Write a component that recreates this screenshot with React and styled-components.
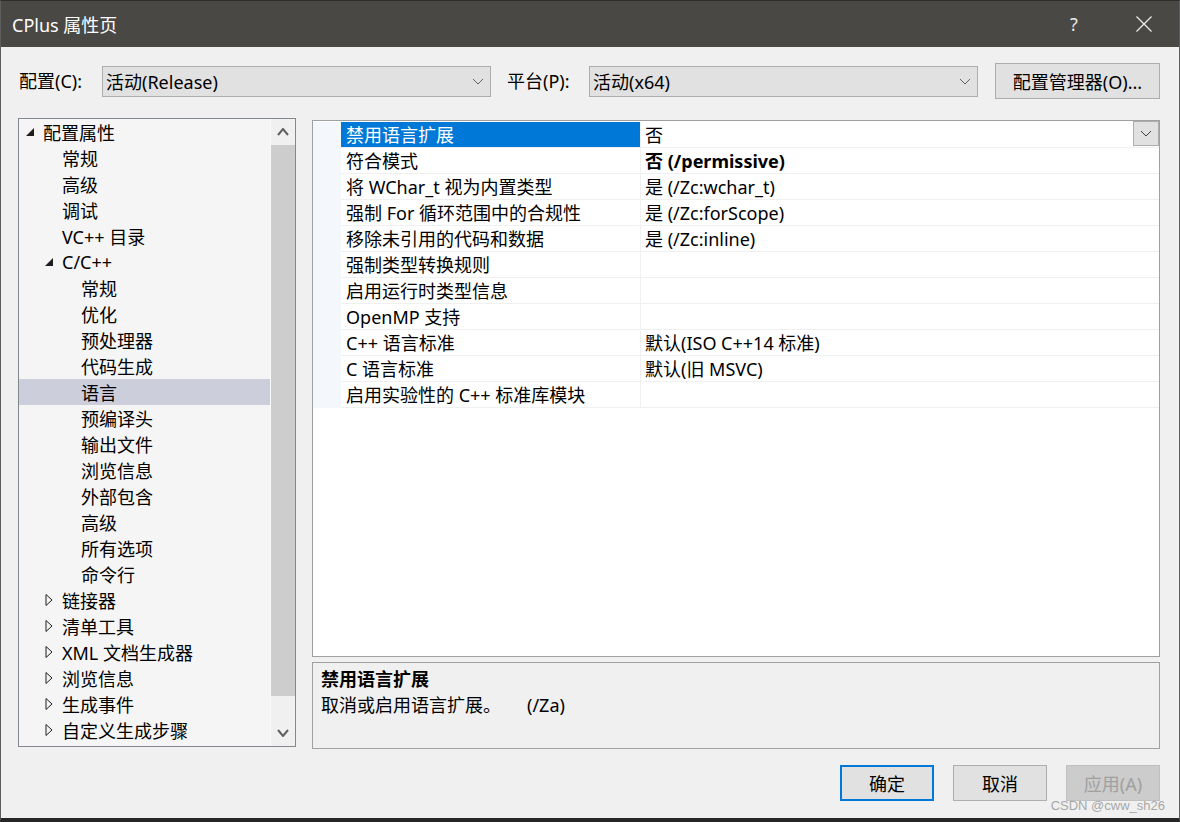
import React from "react";
import styled, { createGlobalStyle } from "styled-components";

const GlobalStyle = createGlobalStyle`
  html, body { margin: 0; padding: 0; background: #2b2b2b; }
  body { font-family: "Noto Sans", "Noto Sans CJK SC", sans-serif; }
  * { box-sizing: border-box; }
`;

const FONT = `"Noto Sans", "Noto Sans CJK SC", sans-serif`;

const Window = styled.div`
  position: relative;
  width: 1180px;
  height: 822px;
  display: flex;
  flex-direction: column;
  border-top: 1px solid #2d2d2d;
  border-left: 1px solid #5e5e5e;
  border-right: 1px solid #5e5e5e;
  border-bottom: 4px solid #262626;
  font-family: ${FONT};
  font-size: 18px;
  color: #000;
  overflow: hidden;
`;

const TitleBar = styled.div`
  height: 46px;
  background: #4a4845;
  color: #fff;
  display: flex;
  align-items: center;
  padding-left: 11px;
  font-size: 18px;
  flex-shrink: 0;
`;

const TitleText = styled.div`
  flex: 1;
`;

const TitleButton = styled.div`
  width: 70px;
  height: 46px;
  display: flex;
  align-items: center;
  justify-content: center;
  color: #e8e8e8;
  font-size: 18px;
`;

const Body = styled.div`
  flex: 1;
  background: #f0f0f0;
  display: flex;
  flex-direction: column;
  padding: 16px 19px 0 17px;
`;

const ConfigRow = styled.div`
  display: flex;
  align-items: center;
  height: 36px;
`;

const Label = styled.div`
  width: ${(p) => p.$w}px;
  flex-shrink: 0;
  padding-left: ${(p) => p.$pl || 0}px;
  line-height: 31px;
`;

const Combo = styled.div`
  width: 389px;
  height: 31px;
  border: 1px solid #adadad;
  background: #e1e1e1;
  display: flex;
  align-items: center;
  padding: 0 6px 0 3px;
  flex-shrink: 0;
`;

const ComboText = styled.div`
  flex: 1;
`;

const ManagerButton = styled.button`
  margin-left: 17px;
  width: 165px;
  height: 36px;
  border: 1px solid #adadad;
  background: #e1e1e1;
  font-family: ${FONT};
  font-size: 18px;
  color: #000;
  padding: 0;
`;

const Main = styled.div`
  margin-top: 19px;
  display: flex;
  gap: 16px;
`;

const TreePanel = styled.div`
  width: 278px;
  height: 629px;
  border: 1px solid #828790;
  background: #f5f5f5;
  display: flex;
`;

const TreeList = styled.div`
  flex: 1;
  display: flex;
  flex-direction: column;
`;

const TreeItem = styled.div`
  height: 26px;
  display: flex;
  align-items: center;
  padding-left: ${(p) => 7 + p.$level * 19}px;
  background: ${(p) => (p.$selected ? "#cccedb" : "transparent")};
  white-space: nowrap;
`;

const Expander = styled.span`
  width: 17px;
  flex-shrink: 0;
  display: flex;
  align-items: center;
`;

const ScrollBar = styled.div`
  width: 25px;
  background: #f0f0f0;
  border-left: 1px solid #fafafa;
  display: flex;
  flex-direction: column;
`;

const ScrollArrow = styled.div`
  height: 26px;
  display: flex;
  align-items: center;
  justify-content: center;
  flex-shrink: 0;
`;

const ScrollThumb = styled.div`
  height: 551px;
  background: #cdcdcd;
`;

const ScrollTrack = styled.div`
  flex: 1;
`;

const RightCol = styled.div`
  width: 848px;
  margin-top: 2px;
  display: flex;
  flex-direction: column;
  gap: 5px;
`;

const Grid = styled.div`
  height: 537px;
  border: 1px solid #a0a0a0;
  background: #fff;
  display: flex;
  flex-direction: column;
  padding-top: 1px;
`;

const GridRow = styled.div`
  height: 26px;
  display: grid;
  grid-template-columns: 28px 300px 1fr;
  line-height: 24px;
`;

const Gutter = styled.div`
  background: #f4f7fb;
`;

const NameCell = styled.div`
  padding-left: 5px;
  display: flex;
  align-items: center;
  white-space: nowrap;
  border-right: 1px solid #f0f0f0;
  border-bottom: 1px solid #f0f0f0;
  background: ${(p) => (p.$selected ? "#0078d7" : "transparent")};
  color: ${(p) => (p.$selected ? "#fff" : "#000")};
`;

const ValueCell = styled.div`
  padding-left: 4px;
  display: flex;
  align-items: center;
  white-space: nowrap;
  border-bottom: 1px solid #f0f0f0;
  font-weight: ${(p) => (p.$bold ? 700 : 400)};
`;

const ValueText = styled.div`
  flex: 1;
`;

const DropButton = styled.div`
  width: 26px;
  height: 25px;
  margin-top: -1px;
  background: #e1e1e1;
  border: 1px solid #adadad;
  display: flex;
  align-items: center;
  justify-content: center;
  align-self: flex-start;
`;

const DescPanel = styled.div`
  height: 87px;
  border: 1px solid #a0a0a0;
  background: #f0f0f0;
  padding: 3px 8px;
  line-height: 26px;
`;

const DescTitle = styled.div`
  font-weight: 700;
`;

const DescText = styled.div`
  white-space: nowrap;
`;

const DescSwitch = styled.span`
  margin-left: 26px;
`;

const ButtonRow = styled.div`
  margin-top: 16px;
  display: flex;
  justify-content: flex-end;
  gap: 19px;
`;

const DlgButton = styled.button`
  width: 94px;
  height: 36px;
  padding: 0;
  font-family: ${FONT};
  font-size: 18px;
  background: ${(p) => (p.$disabled ? "#cccccc" : "#e1e1e1")};
  color: ${(p) => (p.$disabled ? "#a0a0a0" : "#000")};
  border: ${(p) =>
    p.$primary ? "2px solid #0078d7" : p.$disabled ? "1px solid #bfbfbf" : "1px solid #adadad"};
`;

const Watermark = styled.div`
  position: absolute;
  right: 14px;
  bottom: 5px;
  font-family: "Liberation Sans", sans-serif;
  font-size: 13px;
  color: rgba(140, 140, 140, 0.75);
`;

const Chevron = ({ w = 10, h = 5, color = "#606060", sw = 1, up = false }) => (
  <svg width={w + 2} height={h + 2} viewBox={`0 0 ${w + 2} ${h + 2}`}>
    <polyline
      points={
        up
          ? `1,${h + 1} ${w / 2 + 1},1 ${w + 1},${h + 1}`
          : `1,1 ${w / 2 + 1},${h + 1} ${w + 1},1`
      }
      fill="none"
      stroke={color}
      strokeWidth={sw}
    />
  </svg>
);

const ExpandedTri = () => (
  <svg width="9" height="9" viewBox="0 0 9 9">
    <polygon points="8,0 8,8 0,8" fill="#1e1e1e" />
  </svg>
);

const CollapsedTri = () => (
  <svg width="8" height="12" viewBox="0 0 8 12">
    <polygon points="1,0.5 7,6 1,11.5" fill="none" stroke="#1e1e1e" strokeWidth="1" />
  </svg>
);

const CloseIcon = () => (
  <svg width="16" height="16" viewBox="0 0 16 16">
    <path d="M0.5 0.5 L15.5 15.5 M15.5 0.5 L0.5 15.5" stroke="#f0f0f0" strokeWidth="1.2" />
  </svg>
);

const tree = [
  { t: "配置属性", l: 0, e: "open" },
  { t: "常规", l: 1 },
  { t: "高级", l: 1 },
  { t: "调试", l: 1 },
  { t: "VC++ 目录", l: 1 },
  { t: "C/C++", l: 1, e: "open" },
  { t: "常规", l: 2 },
  { t: "优化", l: 2 },
  { t: "预处理器", l: 2 },
  { t: "代码生成", l: 2 },
  { t: "语言", l: 2, s: true },
  { t: "预编译头", l: 2 },
  { t: "输出文件", l: 2 },
  { t: "浏览信息", l: 2 },
  { t: "外部包含", l: 2 },
  { t: "高级", l: 2 },
  { t: "所有选项", l: 2 },
  { t: "命令行", l: 2 },
  { t: "链接器", l: 1, e: "closed" },
  { t: "清单工具", l: 1, e: "closed" },
  { t: "XML 文档生成器", l: 1, e: "closed" },
  { t: "浏览信息", l: 1, e: "closed" },
  { t: "生成事件", l: 1, e: "closed" },
  { t: "自定义生成步骤", l: 1, e: "closed" },
];

const props = [
  { n: "禁用语言扩展", v: "否", sel: true },
  { n: "符合模式", v: "否 (/permissive)", bold: true },
  { n: "将 WChar_t 视为内置类型", v: "是 (/Zc:wchar_t)" },
  { n: "强制 For 循环范围中的合规性", v: "是 (/Zc:forScope)" },
  { n: "移除未引用的代码和数据", v: "是 (/Zc:inline)" },
  { n: "强制类型转换规则", v: "" },
  { n: "启用运行时类型信息", v: "" },
  { n: "OpenMP 支持", v: "" },
  { n: "C++ 语言标准", v: "默认(ISO C++14 标准)" },
  { n: "C 语言标准", v: "默认(旧 MSVC)" },
  { n: "启用实验性的 C++ 标准库模块", v: "" },
];

export default function App() {
  return (
    <Window>
      <GlobalStyle />
      <TitleBar>
        <TitleText>CPlus 属性页</TitleText>
        <TitleButton>?</TitleButton>
        <TitleButton>
          <CloseIcon />
        </TitleButton>
      </TitleBar>
      <Body>
        <ConfigRow>
          <Label $w={84} $pl={1}>配置(C):</Label>
          <Combo>
            <ComboText>活动(Release)</ComboText>
            <Chevron />
          </Combo>
          <Label $w={98} $pl={16}>平台(P):</Label>
          <Combo>
            <ComboText>活动(x64)</ComboText>
            <Chevron />
          </Combo>
          <ManagerButton>配置管理器(O)...</ManagerButton>
        </ConfigRow>
        <Main>
          <TreePanel>
            <TreeList>
              {tree.map((it, i) => (
                <TreeItem key={i} $level={it.l} $selected={it.s}>
                  <Expander>
                    {it.e === "open" && <ExpandedTri />}
                    {it.e === "closed" && <CollapsedTri />}
                  </Expander>
                  {it.t}
                </TreeItem>
              ))}
            </TreeList>
            <ScrollBar>
              <ScrollArrow>
                <Chevron w={10} h={6} sw={2} up color="#606060" />
              </ScrollArrow>
              <ScrollThumb />
              <ScrollTrack />
              <ScrollArrow>
                <Chevron w={10} h={6} sw={2} color="#606060" />
              </ScrollArrow>
            </ScrollBar>
          </TreePanel>
          <RightCol>
            <Grid>
              {props.map((p, i) => (
                <GridRow key={i}>
                  <Gutter />
                  <NameCell $selected={p.sel}>{p.n}</NameCell>
                  <ValueCell $bold={p.bold}>
                    <ValueText>{p.v}</ValueText>
                    {p.sel && (
                      <DropButton>
                        <Chevron w={10} h={5} color="#404040" />
                      </DropButton>
                    )}
                  </ValueCell>
                </GridRow>
              ))}
            </Grid>
            <DescPanel>
              <DescTitle>禁用语言扩展</DescTitle>
              <DescText>
                取消或启用语言扩展。<DescSwitch>(/Za)</DescSwitch>
              </DescText>
            </DescPanel>
          </RightCol>
        </Main>
        <ButtonRow>
          <DlgButton $primary>确定</DlgButton>
          <DlgButton>取消</DlgButton>
          <DlgButton $disabled>应用(A)</DlgButton>
        </ButtonRow>
      </Body>
      <Watermark>CSDN @cww_sh26</Watermark>
    </Window>
  );
}
